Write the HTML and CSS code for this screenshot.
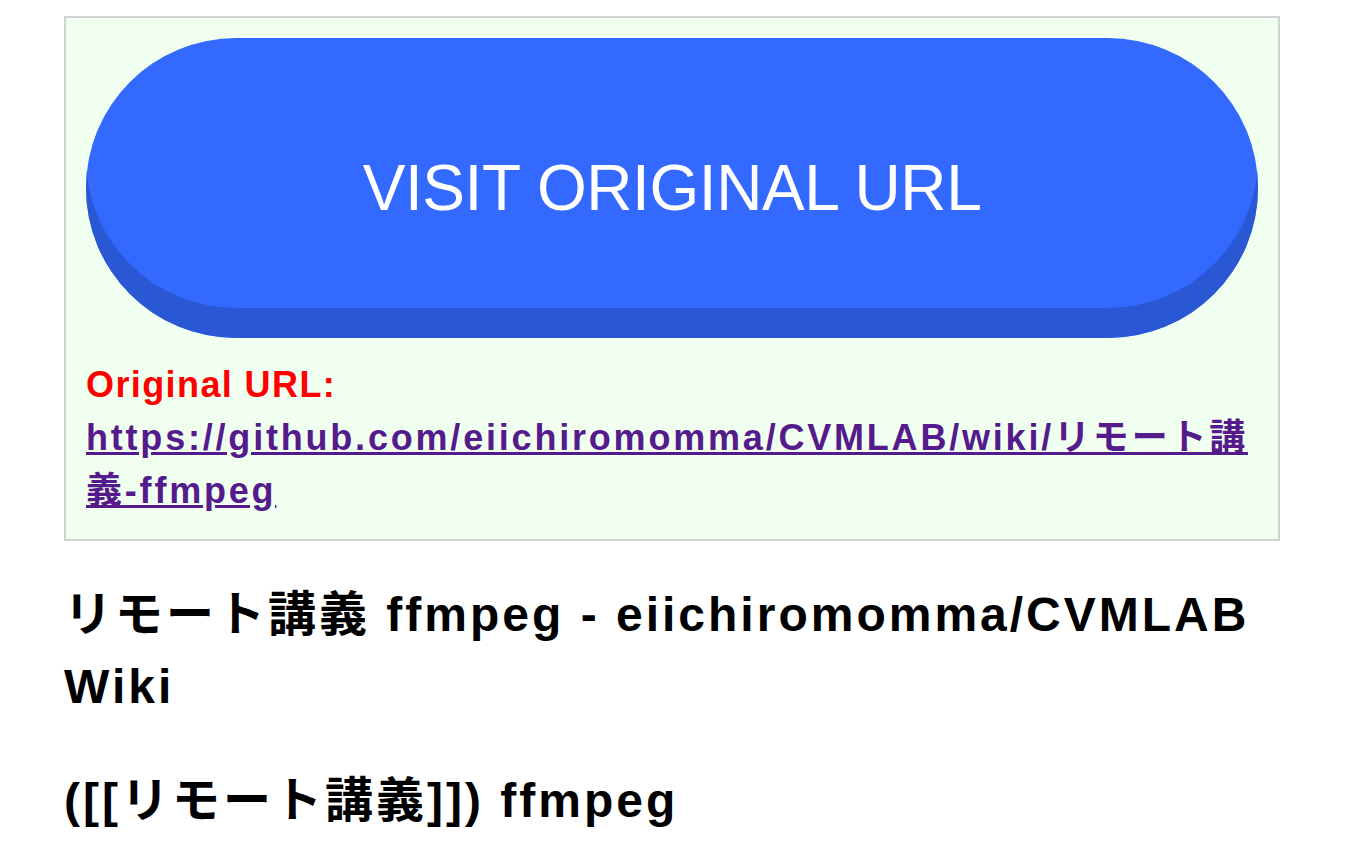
FILE: index.html
```html
<!DOCTYPE html>
<html lang="ja">
<head>
<meta charset="utf-8">
<title>リモート講義 ffmpeg - eiichiromomma/CVMLAB Wiki</title>
<link rel="stylesheet" href="styles.css">
</head>
<body>
<div class="page">
  <div class="card">
    <a class="visit-btn" href="https://github.com/eiichiromomma/CVMLAB/wiki/リモート講義-ffmpeg">VISIT ORIGINAL URL</a>
    <div class="orig">
      <span class="orig-label">Original URL:</span>
      <a class="orig-link" href="https://github.com/eiichiromomma/CVMLAB/wiki/リモート講義-ffmpeg">https://github.com/eiichiromomma/CVMLAB/wiki/リモート講義-ffmpeg</a>
    </div>
  </div>
  <h1 class="title">リモート講義 ffmpeg - eiichiromomma/CVMLAB Wiki</h1>
  <h2 class="subtitle">([[リモート講義]]) ffmpeg</h2>
</div>
</body>
</html>
```

FILE: styles.css
```css
html, body {
  margin: 0;
  padding: 0;
  background: #ffffff;
}

body {
  font-family: "Liberation Sans", "Noto Sans CJK JP", sans-serif;
  color: #000000;
}

.page {
  width: 1216px;
  margin: 16px 0 0 64px;
}

.card {
  background: #f0fff0;
  border: 2px solid #d3d3d3;
  padding: 20px 20px 22px;
}

.visit-btn {
  display: flex;
  align-items: center;
  justify-content: center;
  height: 300px;
  border-radius: 150px;
  background: #3369ff;
  box-shadow: inset 0 -30px 0 #2a58d4;
  color: #ffffff;
  font-family: "Liberation Sans", sans-serif;
  font-size: 64px;
  font-weight: normal;
  letter-spacing: -0.4px;
  text-decoration: none;
}

.orig {
  margin-top: 20px;
  font-size: 36px;
  line-height: 53px;
  font-weight: bold;
}

.orig-label {
  display: block;
  color: #ff0000;
  letter-spacing: 1.4px;
}

.orig-link {
  display: block;
  color: #551a8b;
  text-decoration: underline;
  letter-spacing: 2.8px;
}

.title,
.subtitle {
  font-size: 48px;
  line-height: 72px;
  font-weight: bold;
  letter-spacing: 3px;
  margin: 0;
}

.title {
  margin-top: 38px;
}

.subtitle {
  margin-top: 42px;
}
```
